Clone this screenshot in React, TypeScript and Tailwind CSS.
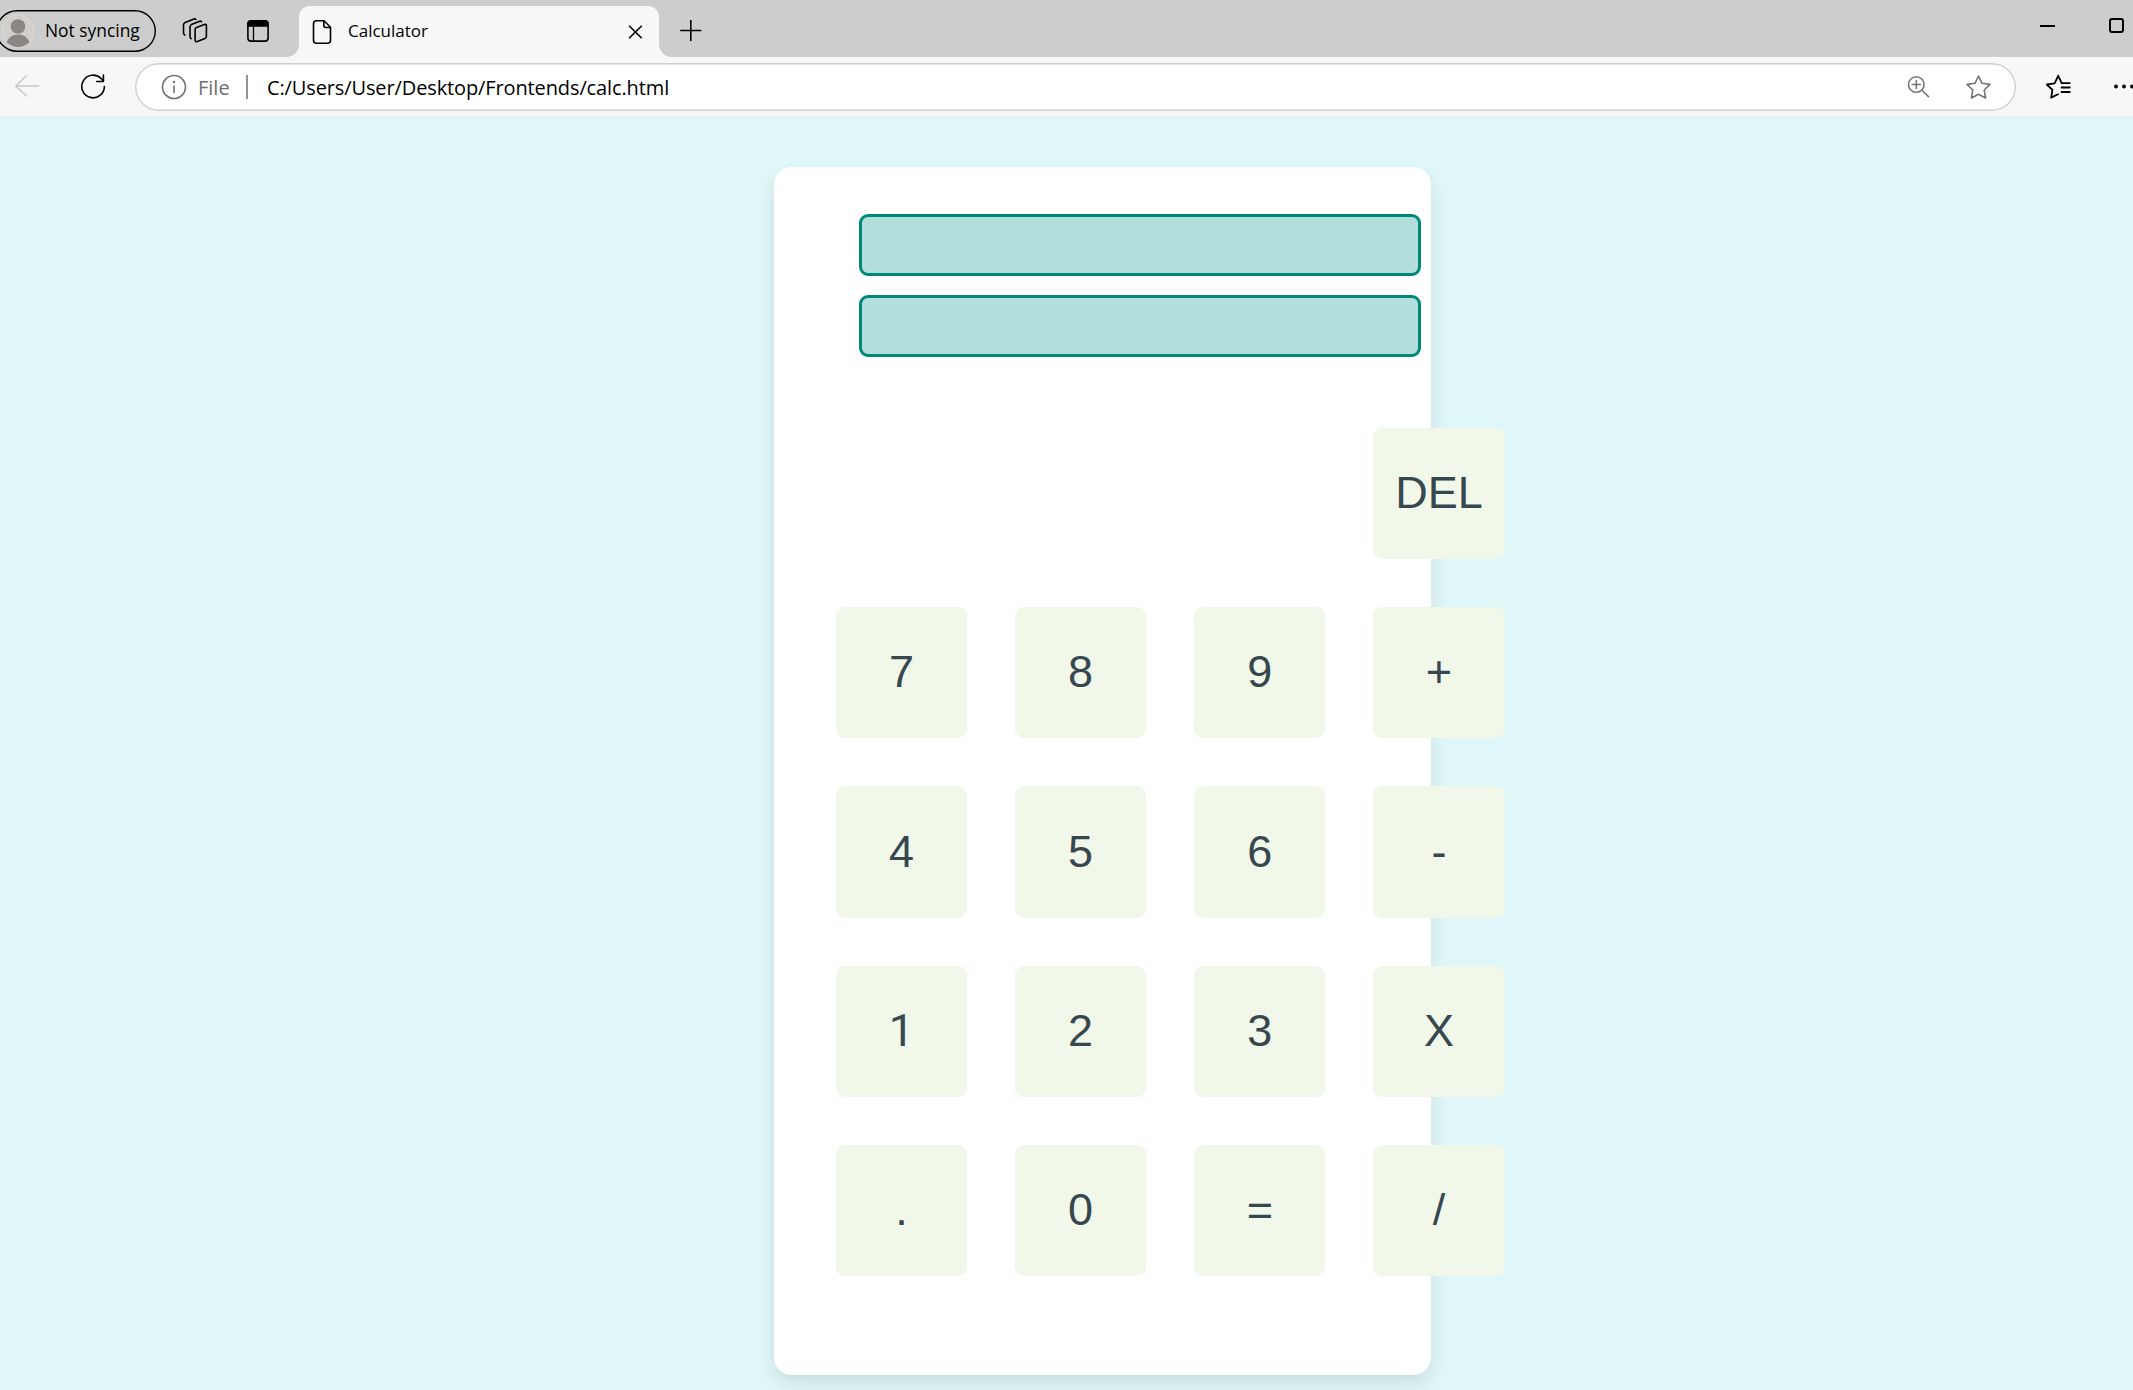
import React from "react";

type IconProps = {
  box: string;
  className?: string;
  children: React.ReactNode;
};

function Icon({ box, className = "", children }: IconProps) {
  const [, , w, h] = box.split(" ");
  return (
    <svg
      viewBox={box}
      width={w}
      height={h}
      fill="none"
      stroke="currentColor"
      strokeWidth={1.6}
      strokeLinecap="round"
      strokeLinejoin="round"
      className={`block shrink-0 ${className}`}
    >
      {children}
    </svg>
  );
}

function TabStrip() {
  return (
    <header className="flex h-[57px] bg-[#cdcdcd] text-black">
      <div className="-ml-1 mt-[10px] flex h-[42px] w-[160px] shrink-0 items-center rounded-full pl-[5px] shadow-[inset_0_0_0_1.4px_#000]">
        <svg viewBox="0 0 34 34" className="block size-[34px] shrink-0">
          <defs>
            <clipPath id="avatar">
              <circle cx="17" cy="17" r="16" />
            </clipPath>
          </defs>
          <circle cx="17" cy="17" r="16" fill="#d2d0cc" stroke="#dedcd8" />
          <g clipPath="url(#avatar)" fill="#8a8683">
            <circle cx="17" cy="12.5" r="7.3" />
            <ellipse cx="17" cy="31.5" rx="12" ry="11" />
          </g>
        </svg>
        <span className="ml-[10px] whitespace-nowrap text-[17.4px] leading-none">Not syncing</span>
      </div>

      <Icon box="182 18 26 26" className="mt-[18px] ml-[26px]">
        <path d="M196.600 27.600l7.800-3.100q2-.6 2 1.300v10.400q0 1.600-1.500 2.200l-7.600 3.100q-2.200.7-2.200-1.500V29.600q0-1.500 1.500-2z" />
        <path d="M201.500 21.800q-.3-1-1.800-.5l-8.300 3.300q-1.400.7-1.400 2.300v9.500q0 1.600 1.200 2.300" />
        <path d="M195.800 19.400q-.6-.8-1.800-.3l-8.800 3.500q-1.700.7-1.700 2.400v7.500q0 1.800 1.300 2.600" />
      </Icon>

      <Icon box="247 20 22 22" className="mt-[20px] ml-[39px]">
        <rect x="247.900" y="20.900" width="20.200" height="20.200" rx="3.200" />
        <path d="M248 26v-2q0-3 3-3h14q3 0 3 3v2z" fill="currentColor" />
        <path d="M253.500 26v15" strokeWidth={1.3} />
      </Icon>

      <div className="ml-[18px] flex h-[57px] items-end">
        <span className="block size-3 bg-[radial-gradient(circle_at_0_0,#cdcdcd_11.5px,#f7f7f7_12px)]" />
        <div className="flex h-[51px] w-[360px] items-center rounded-t-[11px] bg-[#f7f7f7]">
          <Icon box="312 19 20 26" className="ml-[13px]">
            <path d="M324 20.800h-7.500q-3 0-3 3v16.400q0 3 3 3h11q3 0 3-3V27.300z" />
            <path d="M323.800 21v4.300q0 2.200 2.200 2.200h4.300" />
          </Icon>
          <span className="mb-[2px] ml-[16px] w-[280px] text-[17px] leading-none">Calculator</span>
          <Icon box="628 25 15 14">
            <path d="M629.500 26.200l11.800 11.600M641.300 26.200l-11.800 11.600" />
          </Icon>
        </div>
        <span className="block size-3 bg-[radial-gradient(circle_at_100%_0,#cdcdcd_11.5px,#f7f7f7_12px)]" />
      </div>

      <Icon box="680 20 22 22" className="mt-[20px] ml-[9px]">
        <path d="M680.800 30.500h20M690.800 20.500v20" />
      </Icon>

      <div className="ml-auto mt-[18px] flex">
        <span className="mt-[7px] mr-[54px] block h-[2px] w-[15px] bg-black" />
        <span className="mr-[9px] block size-[15px] rounded-[3px] border-2 border-black" />
      </div>
    </header>
  );
}

function Toolbar() {
  return (
    <nav className="flex h-[60px] items-start border-b border-[#ebebeb] bg-[#f7f7f7]">
      <Icon box="14 74 26 24" className="mt-[17px] ml-[14px] text-[#c9c9c9]">
        <path d="M38.500 86H15.800M26.300 75.800L15.800 86l10.500 10" />
      </Icon>
      <Icon box="80 73 26 27" className="mt-[16px] ml-[40px] text-black">
        <path d="M104.400 86.500a11.300 11.300 0 1 1-3.300-8l2.200 2.200" strokeWidth={1.6} />
        <path d="M103.400 75v6.500h-6.700" strokeWidth={1.6} />
      </Icon>

      <div className="mt-[6px] ml-[29px] flex h-[48px] w-[1881px] shrink-0 items-center rounded-full bg-white px-px shadow-[inset_0_0_0_1.4px_#cfcfcf]">
        <Icon box="161 74 26 26" className="ml-[25px] text-[#707070]">
          <circle cx="174" cy="87" r="11.500" />
          <path d="M174 86v6.500" />
          <circle cx="174" cy="82" r=".5" />
        </Icon>
        <span className="mt-[1px] ml-[11px] w-[48px] text-[20px] leading-none text-[#707070]">File</span>
        <span className="block h-6 w-[2px] bg-[#929292]" />
        <span className="mt-[2px] ml-[19px] whitespace-nowrap text-[20px] leading-none tracking-[-0.12px] text-black">
          C:/Users/User/Desktop/Frontends/calc.html
        </span>
        <Icon box="1907 75 24 24" className="ml-auto text-[#757575]">
          <circle cx="1916.300" cy="84.500" r="7.800" />
          <path d="M1922 90.500l6.500 6.200M1912.300 84.500h8M1916.300 80.500v8" />
        </Icon>
        <Icon box="1965 74 27 26" className="mr-[23px] ml-[34px] text-[#757575]">
          <path d="M1978.500 76l3.500 7.300 8 1.100-5.800 5.600 1.400 8-7.100-3.800-7.100 3.800 1.400-8-5.800-5.600 8-1.100z" />
        </Icon>
      </div>

      <Icon box="2045 74 27 26" className="mt-[17px] ml-[29px] text-black">
        <path d="M2058 94.300l-6.800 3.300 1.200-7.700-5.600-5.400 7.800-1.100 3.600-7.600 3.500 7.300h8.100" strokeWidth={1.8} />
        <path d="M2061.500 87.500h8.300M2061.500 92h8.300" strokeWidth={1.8} />
      </Icon>
      <Icon box="2114 83 19 7" className="mt-[26px] ml-[42px] text-black">
        <g fill="currentColor" stroke="none">
          <circle cx="2116" cy="86.500" r="1.900" />
          <circle cx="2124" cy="86.500" r="1.900" />
          <circle cx="2132" cy="86.500" r="1.900" />
        </g>
      </Icon>
    </nav>
  );
}

const keys = ["DEL", "7", "8", "9", "+", "4", "5", "6", "-", "1", "2", "3", "X", ".", "0", "=", "/"];

function Calculator() {
  return (
    <section className="ml-[774px] h-[1208px] w-[657px] rounded-[18px] bg-white pt-[47px] shadow-[0_9px_18px_rgba(0,0,0,0.1)]">
      <div className="ml-[85px] flex w-[562px] flex-col gap-[19px]">
        <input
          readOnly
          aria-label="Expression"
          className="block h-[62px] rounded-[9px] border-[3px] border-[#00897b] bg-[#b2dfdb] outline-none"
        />
        <input
          readOnly
          aria-label="Result"
          className="block h-[62px] rounded-[9px] border-[3px] border-[#00897b] bg-[#b2dfdb] outline-none"
        />
      </div>
      <div className="mt-[71px] ml-[61.8px] grid w-[669px] grid-cols-[repeat(4,131.25px)] gap-[47.95px]">
        {keys.map((k) => (
          <button
            key={k}
            className={`h-[131.25px] rounded-[9px] bg-[#f1f8e9] pb-[2px] text-center text-[45px] leading-none text-[#37474f] first:col-start-4 ${
              k === "1" ? "font-[Roboto,sans-serif]" : "font-['Liberation_Sans',Arial,sans-serif]"
            }`}
          >
            {k}
          </button>
        ))}
      </div>
    </section>
  );
}

export default function App() {
  return (
    <div className="h-[1390px] w-[2133px] overflow-hidden bg-[#e0f7fa] font-['Open_Sans','Noto_Sans',sans-serif]">
      <TabStrip />
      <Toolbar />
      <main className="pt-[50px]">
        <Calculator />
      </main>
    </div>
  );
}
